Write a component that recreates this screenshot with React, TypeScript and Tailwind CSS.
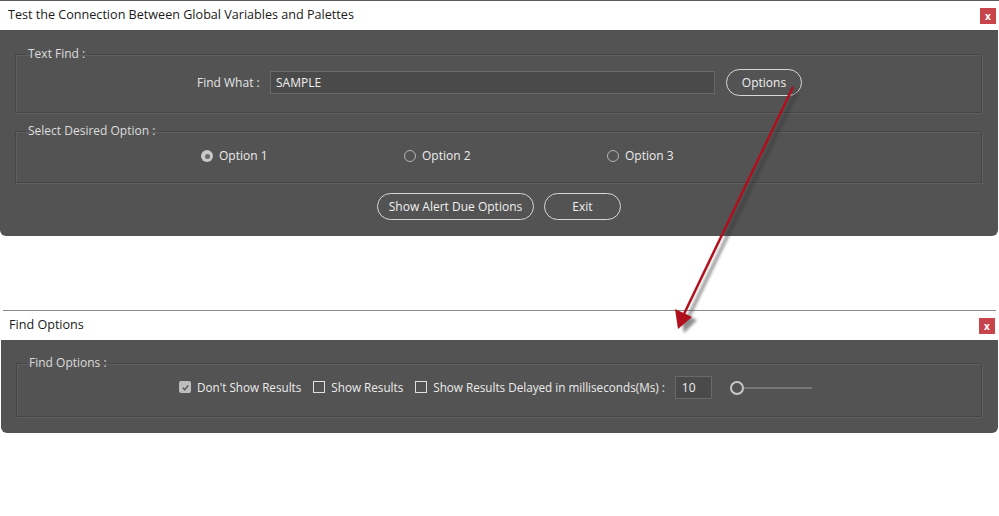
import React from "react";

const font = { fontFamily: '"Open Sans", "Noto Sans", sans-serif' };

function CloseBox() {
  return (
    <div className="w-4 h-4 bg-[#c7444b] text-white text-[10px] leading-4 text-center font-bold">
      x
    </div>
  );
}

function TitleBar({ title }: { title: string }) {
  return (
    <div className="h-[29px] bg-white flex items-center justify-between pl-2 pr-[3px]">
      <span className="text-[12.6px] text-[#1a1a1a]">{title}</span>
      <CloseBox />
    </div>
  );
}

function Group({
  label,
  className,
  children,
}: {
  label: string;
  className: string;
  children: React.ReactNode;
}) {
  return (
    <fieldset
      className={`border border-[#464646] shadow-[1px_1px_0_#5f5f5f,inset_1px_1px_0_#5f5f5f] ${className}`}
    >
      <legend className="ml-[10px] px-[2px] text-[12px] text-[#dcdcdc] leading-4">{label}</legend>
      {children}
    </fieldset>
  );
}

function Radio({ checked, label }: { checked?: boolean; label: string }) {
  return (
    <div className="flex items-center gap-[6px]">
      {checked ? (
        <span className="w-3 h-3 rounded-full bg-[#c8c8c8] flex items-center justify-center">
          <span className="w-[5px] h-[5px] rounded-full bg-[#6a6a6a]" />
        </span>
      ) : (
        <span className="w-3 h-3 rounded-full border border-[#b4b4b4]" />
      )}
      <span className="text-[12px] text-[#ececec]">{label}</span>
    </div>
  );
}

function Check({ checked, label }: { checked?: boolean; label: string }) {
  return (
    <div className="flex items-center gap-[6px]">
      {checked ? (
        <span className="w-3 h-3 rounded-[2px] bg-[#bdbdbd] flex items-center justify-center">
          <svg width="9" height="9" viewBox="0 0 10 10">
            <path d="M2 5.2 L4.2 7.4 L8.2 2.6" fill="none" stroke="#555" strokeWidth="1.6" />
          </svg>
        </span>
      ) : (
        <span className="w-3 h-3 border border-[#e0e0e0]" />
      )}
      <span className="text-[11.7px] text-[#ececec]">{label}</span>
    </div>
  );
}

function PillButton({ label, className }: { label: string; className: string }) {
  return (
    <button
      className={`h-[27px] rounded-full border border-[#d8d8d8] text-[12px] text-[#f0f0f0] ${className}`}
    >
      {label}
    </button>
  );
}

export default function App() {
  return (
    <div className="relative w-[999px] h-[516px] bg-white overflow-hidden" style={font}>
      {/* Window 1 */}
      <div className="border-t border-[#5a5a5a]">
        <TitleBar title="Test the Connection Between Global Variables and Palettes" />
        <div className="h-[206px] bg-[#535353] rounded-b-[6px] mr-[1px] pt-[16px] px-[15px]">
          <Group label="Text Find :" className="h-[67px] mr-[1px]">
            <div className="flex items-center pl-[181px] pt-[7px]">
              <span className="text-[12px] text-[#e4e4e4] w-[63px]">Find What :</span>
              <div className="ml-[10px] w-[445px] h-[23px] bg-[#4a4a4a] border border-[#6a6a6a] text-[12px] text-[#f0f0f0] pl-[5px] leading-[21px]">
                SAMPLE
              </div>
              <PillButton label="Options" className="ml-[11px] w-[76px]" />
            </div>
          </Group>
          <Group label="Select Desired Option :" className="h-[60px] mt-[10px] mr-[1px]">
            <div className="flex items-center pl-[185px] pt-[8px]">
              <div className="w-[203px]">
                <Radio checked label="Option 1" />
              </div>
              <div className="w-[203px]">
                <Radio label="Option 2" />
              </div>
              <Radio label="Option 3" />
            </div>
          </Group>
          <div className="flex justify-center gap-[10px] mt-[10px]">
            <PillButton label="Show Alert Due Options" className="w-[157px]" />
            <PillButton label="Exit" className="w-[77px]" />
          </div>
        </div>
      </div>

      {/* Window 2 */}
      <div className="mt-[74px] mx-[1px]">
        <div className="mx-[2px] h-px bg-[#8a8a8a]" />
        <TitleBar title="Find Options" />
        <div className="h-[93px] bg-[#535353] rounded-b-[6px] pt-[15px] px-[15px]">
          <Group label="Find Options :" className="h-[62px] mr-[1px]">
            <div className="flex items-center pl-[162px] pt-[5px]">
              <Check checked label="Don't Show Results" />
              <div className="ml-[12px]">
                <Check label="Show Results" />
              </div>
              <div className="ml-[12px]">
                <Check label="Show Results Delayed in milliseconds(Ms) :" />
              </div>
              <div className="ml-[10px] w-[37px] h-[23px] bg-[#4a4a4a] border border-[#6a6a6a] text-[12px] text-[#f0f0f0] pl-[6px] leading-[21px]">
                10
              </div>
              <div className="ml-[18px] flex items-center">
                <span className="w-[14px] h-[14px] rounded-full border-2 border-[#c8c8c8]" />
                <span className="w-[68px] h-[2px] bg-[#777]" />
              </div>
            </div>
          </Group>
        </div>
      </div>

      {/* Arrow overlay */}
      <svg
        className="absolute inset-0 pointer-events-none"
        width="999"
        height="516"
        viewBox="0 0 999 516"
      >
        <defs>
          <filter id="blur" x="-20%" y="-20%" width="140%" height="140%">
            <feGaussianBlur stdDeviation="1.6" />
          </filter>
        </defs>
        <g filter="url(#blur)" opacity="0.55">
          <line x1="797" y1="91" x2="688" y2="318" stroke="#333" strokeWidth="3" />
          <polygon points="684,333 680,313 697,320" fill="#333" />
        </g>
        <line x1="793" y1="87" x2="684" y2="314" stroke="#b0101c" strokeWidth="2.5" />
        <polygon points="678,329 675,309 692,317" fill="#b0101c" />
      </svg>
    </div>
  );
}
